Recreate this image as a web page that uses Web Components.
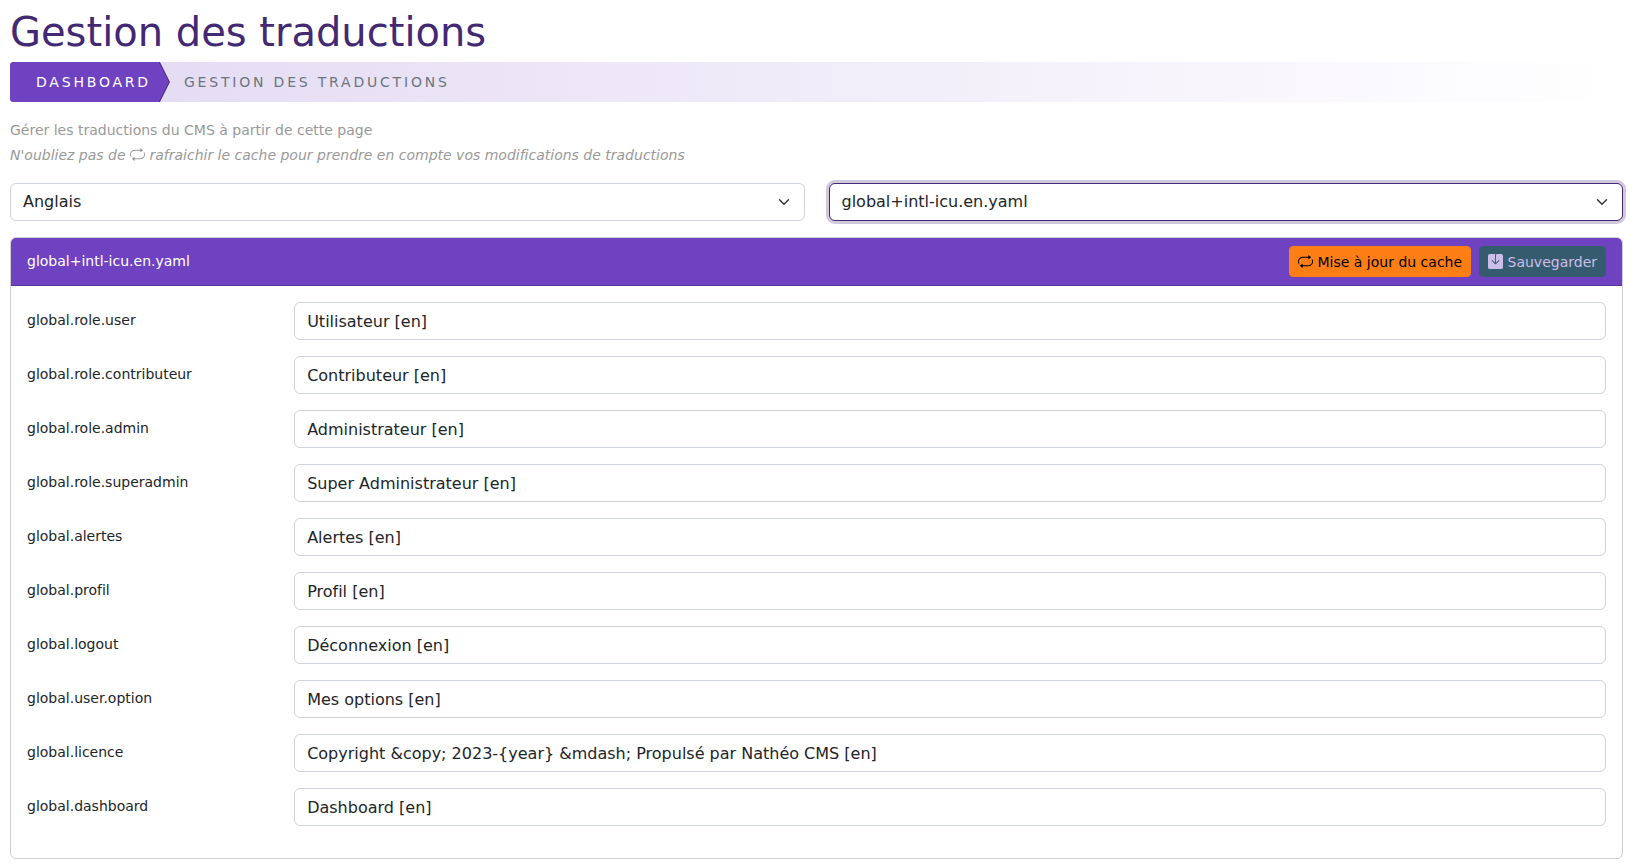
<!DOCTYPE html>
<html lang="fr">
<head>
<meta charset="utf-8">
<meta name="viewport" content="width=device-width, initial-scale=1">
<title>Gestion des traductions</title>
<style>
  body {
    margin: 0;
    background: #fff;
    color: #212529;
    font: 14px/21px "DejaVu Sans", Verdana, sans-serif;
    font-variant-ligatures: none;
  }
</style>
</head>
<body>
<translation-page></translation-page>

<script>
const ICONS = {
  repeat: 'M11 5.466V4H5a4 4 0 0 0-3.584 5.777.5.5 0 1 1-.896.446A5 5 0 0 1 5 3h6V1.534a.25.25 0 0 1 .41-.192l2.36 1.966c.12.1.12.284 0 .384l-2.36 1.966a.25.25 0 0 1-.41-.192m3.81.086a.5.5 0 0 1 .67.225A5 5 0 0 1 11 13H5v1.466a.25.25 0 0 1-.41.192l-2.36-1.966a.25.25 0 0 1 0-.384l2.36-1.966a.25.25 0 0 1 .41.192V12h6a4 4 0 0 0 3.585-5.777.5.5 0 0 1 .225-.67Z',
  save: 'M8.5 1.5A1.5 1.5 0 0 1 10 0h4a2 2 0 0 1 2 2v12a2 2 0 0 1-2 2H2a2 2 0 0 1-2-2V2a2 2 0 0 1 2-2h6c-.314.418-.5.937-.5 1.5v7.793L4.854 6.646a.5.5 0 1 0-.708.708l3.5 3.5a.5.5 0 0 0 .708 0l3.5-3.5a.5.5 0 0 0-.708-.708L8.5 9.293z'
};

function define(name, render) {
  customElements.define(name, class extends HTMLElement {
    connectedCallback() {
      if (this.shadowRoot) return;
      this.attachShadow({ mode: 'open' }).innerHTML = render(this);
    }
  });
}

define('ui-icon', el => `
  <style>
    :host { display: inline-block; width: 15px; height: 15px; vertical-align: -2px; }
    svg { display: block; width: 100%; height: 100%; }
  </style>
  <svg viewBox="0 0 16 16" fill="currentColor" aria-hidden="true"><path d="${ICONS[el.getAttribute('name')]}"/></svg>`);

define('page-breadcrumb', el => `
  <style>
    :host { display: block; }
    nav {
      display: flex; height: 40px; border-radius: 4px; overflow: hidden;
      background: linear-gradient(to right, #e2d9f3, #fff);
      line-height: 40px; letter-spacing: .2em; text-transform: uppercase;
    }
    .edge { background: #432874; clip-path: polygon(0 0, calc(100% - 10px) 0, 100% 50%, calc(100% - 10px) 100%, 0 100%); }
    a {
      display: block; padding: 0 18px 0 26px; margin-right: 1px;
      background: #6f42c1; color: #fff; text-decoration: none;
      clip-path: polygon(0 0, calc(100% - 10px) 0, 100% 50%, calc(100% - 10px) 100%, 0 100%);
    }
    span { padding-left: 14px; color: #6c757d; }
  </style>
  <nav aria-label="Fil d'Ariane">
    <div class="edge"><a href="#">Dashboard</a></div>
    <span aria-current="page"><slot></slot></span>
  </nav>`);

define('select-field', el => `
  <style>
    :host { display: block; }
    select {
      appearance: none; box-sizing: border-box; display: block; width: 100%; height: 38px;
      margin: 0; padding: 6px 36px 6px 12px; border: 1px solid #ced4da; border-radius: 6px;
      font: inherit; font-size: 16px; line-height: 24px; color: #212529; outline: 0;
      background: #fff url("data:image/svg+xml,%3Csvg xmlns='http://www.w3.org/2000/svg' viewBox='0 0 16 16'%3E%3Cpath fill='none' stroke='%23343a40' stroke-linecap='round' stroke-linejoin='round' stroke-width='2' d='m2 5 6 6 6-6'/%3E%3C/svg%3E") no-repeat right 12px center / 16px 12px;
    }
    :host([active]) select { border-color: #432874; box-shadow: 0 0 0 3px #d0c9dc; }
  </style>
  <select aria-label="${el.getAttribute('label')}"><option>${el.getAttribute('value')}</option></select>`);

define('action-button', el => `
  <style>
    :host { display: block; }
    button {
      display: block; margin: 0; padding: 5px 8px 3px; border: 1px solid #fd7e14; border-radius: 4px;
      background: #fd7e14; color: #000; font: inherit; line-height: 21px;
    }
    button:disabled { background: #355c6e; border-color: #355c6e; color: #cdbdea; }
  </style>
  <button type="button" ${el.hasAttribute('disabled') ? 'disabled' : ''}><ui-icon name="${el.getAttribute('icon')}"></ui-icon> <slot></slot></button>`);

define('translation-field', el => `
  <style>
    :host { display: grid; grid-template-columns: repeat(12, minmax(0, 1fr)); column-gap: 24px; margin-bottom: 16px; }
    label { grid-column: span 2; padding-top: 8px; }
    input {
      grid-column: span 10; box-sizing: border-box; width: 100%; height: 38px; margin: 0;
      padding: 6px 12px; border: 1px solid #ced4da; border-radius: 6px; background: #fff;
      font: inherit; font-size: 16px; line-height: 24px; color: #212529;
    }
  </style>
  <label for="value"></label><input id="value" type="text">`);

customElements.define('translation-card', class extends HTMLElement {
  connectedCallback() {
    this.attachShadow({ mode: 'open' }).innerHTML = `
      <style>
        :host { display: block; border: 1px solid #d0d0d4; border-radius: 6px; }
        header {
          display: flex; align-items: center; gap: 8px; padding: 8px 16px;
          background: #6f42c1; color: #fff; border-bottom: 1px solid #5a32a3; border-radius: 5px 5px 0 0;
        }
        h2 { flex: 1; margin: 0; font: inherit; }
        .body { padding: 16px; }
      </style>
      <header>
        <h2>global+intl-icu.en.yaml</h2>
        <action-button icon="repeat">Mise à jour du cache</action-button>
        <action-button icon="save" disabled>Sauvegarder</action-button>
      </header>
      <div class="body"></div>`;
    const body = this.shadowRoot.querySelector('.body');
    const entries = [
      ['global.role.user', 'Utilisateur [en]'],
      ['global.role.contributeur', 'Contributeur [en]'],
      ['global.role.admin', 'Administrateur [en]'],
      ['global.role.superadmin', 'Super Administrateur [en]'],
      ['global.alertes', 'Alertes [en]'],
      ['global.profil', 'Profil [en]'],
      ['global.logout', 'Déconnexion [en]'],
      ['global.user.option', 'Mes options [en]'],
      ['global.licence', 'Copyright &copy; 2023-{year} &mdash; Propulsé par Nathéo CMS [en]'],
      ['global.dashboard', 'Dashboard [en]']
    ];
    for (const [key, value] of entries) {
      const field = document.createElement('translation-field');
      body.append(field);
      field.shadowRoot.querySelector('label').textContent = key;
      field.shadowRoot.querySelector('input').value = value;
    }
  }
});

define('translation-page', () => `
  <style>
    :host { display: block; padding: 8px 12px 8px 10px; }
    h1 { margin: 0 0 6px; font-size: 40px; line-height: 48px; font-weight: 400; color: #432874; }
    .intro { margin: 16px 0; color: #999; line-height: 25px; }
    .intro p { margin: 0; }
    .intro p + p { line-height: 24px; }
    .filters { display: grid; grid-template-columns: 1fr 1fr; gap: 24px; margin-bottom: 16px; }
  </style>
  <h1>Gestion des traductions</h1>
  <page-breadcrumb>Gestion des traductions</page-breadcrumb>
  <div class="intro">
    <p>Gérer les traductions du CMS à partir de cette page</p>
    <p><em>N'oubliez pas de <ui-icon name="repeat"></ui-icon> rafraichir le cache pour prendre en compte vos modifications de traductions</em></p>
  </div>
  <div class="filters">
    <select-field label="Langue" value="Anglais"></select-field>
    <select-field label="Fichier" value="global+intl-icu.en.yaml" active></select-field>
  </div>
  <translation-card></translation-card>`);
</script>
</body>
</html>
